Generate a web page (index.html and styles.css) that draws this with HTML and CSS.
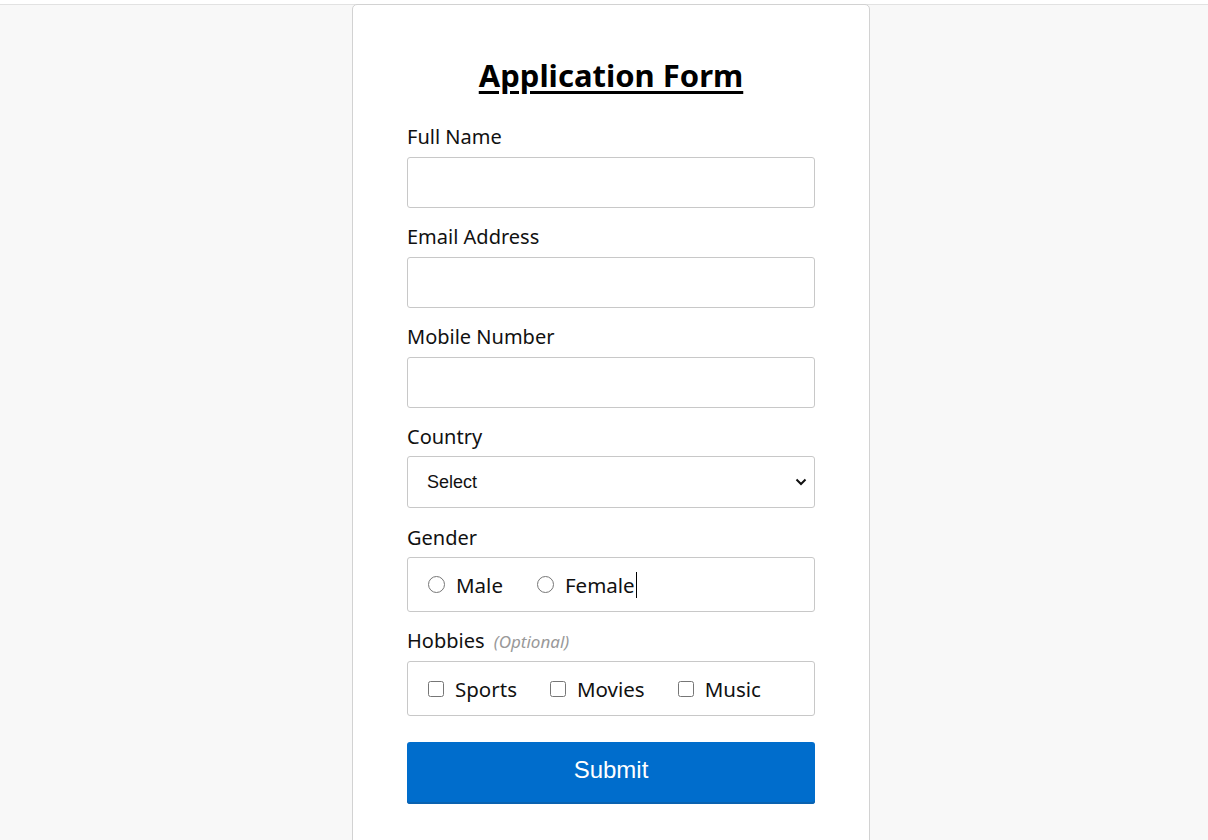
FILE: index.html
```html
<!DOCTYPE html>
<html lang="en">
<head>
<meta charset="utf-8">
<title>Application Form</title>
<link rel="stylesheet" href="styles.css">
</head>
<body>
<div class="topline"></div>
<main class="card">
  <h1 class="title">Application Form</h1>
  <form class="form">
    <div class="field">
      <label class="label" for="name">Full Name</label>
      <input class="input" id="name" type="text">
    </div>
    <div class="field">
      <label class="label" for="email">Email Address</label>
      <input class="input" id="email" type="email">
    </div>
    <div class="field">
      <label class="label" for="mobile">Mobile Number</label>
      <input class="input" id="mobile" type="tel">
    </div>
    <div class="field field-select">
      <label class="label" for="country">Country</label>
      <div class="select-wrap">
        <select class="select" id="country">
          <option>Select</option>
        </select>
        <svg class="chev" width="12" height="8" viewBox="0 0 12 8"><path d="M1.5 1.5 L6 6 L10.5 1.5" fill="none" stroke="#111" stroke-width="2"/></svg>
      </div>
    </div>
    <div class="field field-group">
      <div class="label">Gender</div>
      <div class="choice-box">
        <label class="choice radio-choice"><input type="radio" name="gender" class="radio"><span>Male</span></label>
        <label class="choice radio-choice"><input type="radio" name="gender" class="radio"><span>Female</span><span class="caret"></span></label>
      </div>
    </div>
    <div class="field field-group">
      <div class="label">Hobbies <span class="optional">(Optional)</span></div>
      <div class="choice-box">
        <label class="choice"><input type="checkbox" class="check"><span>Sports</span></label>
        <label class="choice"><input type="checkbox" class="check"><span>Movies</span></label>
        <label class="choice"><input type="checkbox" class="check"><span>Music</span></label>
      </div>
    </div>
    <button type="button" class="submit">Submit</button>
  </form>
</main>
</body>
</html>
```

FILE: styles.css
```css
* { box-sizing: border-box; }
html, body { margin: 0; padding: 0; }
body {
  background: #f8f8f8;
  font-family: "Noto Sans", "Open Sans", sans-serif;
  color: #111;
  height: 840px;
  overflow: hidden;
  padding-left: 14px;
}
.topline {
  height: 5px;
  margin-left: -14px;
  background: #ffffff;
  border-bottom: 1px solid #e2e2e2;
}
.card {
  width: 518px;
  margin: -1px auto 0;
  background: #fff;
  border: 1px solid #d2d2d2;
  border-radius: 5px;
  padding: 50px 54px 40px;
  min-height: 860px;
}
.title {
  margin: 0 0 28px;
  text-align: center;
  font-size: 31px;
  line-height: 40px;
  font-weight: 700;
  text-decoration: underline;
  text-decoration-thickness: 3px;
  text-underline-offset: 4px;
  color: #000;
}
.form { display: flex; flex-direction: column; }
.field { display: flex; flex-direction: column; margin-bottom: 15px; }
.label {
  font-size: 20px;
  line-height: 28px;
  margin-bottom: 6px;
  color: #111;
}
.optional {
  font-size: 17px;
  font-style: italic;
  color: #999;
  margin-left: 4px;
}
.input {
  height: 51px;
  border: 1px solid #c8c8c8;
  border-radius: 3px;
  padding: 0 12px;
  font-size: 18px;
  background: #fff;
  outline: none;
}
.field-select { margin-bottom: 16px; }
.field-select .label { margin-bottom: 5px; }
.select-wrap { position: relative; }
.select {
  width: 100%;
  height: 52px;
  -webkit-appearance: none;
  appearance: none;
  border: 1px solid #c8c8c8;
  border-radius: 3px;
  background: #fff;
  padding: 0 19px;
  font-family: "Liberation Sans", Arial, sans-serif;
  font-size: 18px;
  color: #111;
  outline: none;
}
.chev { position: absolute; right: 8px; top: 22px; pointer-events: none; }
.field-group { margin-bottom: 15px; }
.field-group .label { margin-bottom: 5px; }
.field-group:last-of-type { margin-bottom: 26px; }
.choice-box {
  height: 55px;
  border: 1px solid #c8c8c8;
  border-radius: 3px;
  display: flex;
  align-items: center;
  padding: 0 20px;
  gap: 33px;
}
.choice {
  display: flex;
  align-items: center;
  font-size: 20.5px;
  line-height: 28px;
  color: #111;
}
.radio, .check {
  margin: 0 11px 0 0;
  width: 16px;
  height: 16px;
}
.radio-choice .radio { width: 17px; height: 17px; margin-right: 11px; }
.radio-choice + .radio-choice { margin-left: 1px; }
.caret {
  display: inline-block;
  width: 1px;
  height: 26px;
  background: #000;
  margin-left: 1px;
}
.submit {
  height: 62px;
  border: none;
  border-radius: 3px;
  background: #006dcc;
  box-shadow: inset 0 -2px 0 #0a62b0;
  color: #fff;
  font-family: "Liberation Sans", Arial, sans-serif;
  font-size: 24px;
  padding: 0 0 6px;
}
```
